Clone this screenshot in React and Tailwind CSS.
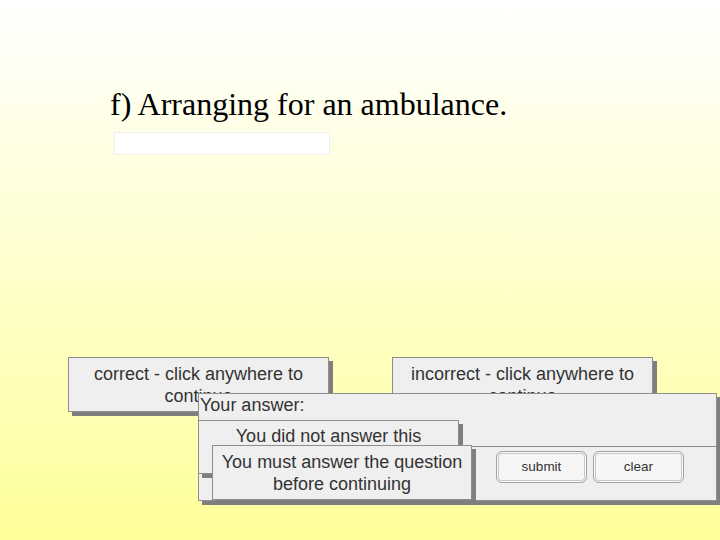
import React from 'react'

const sans = { fontFamily: '"Liberation Sans", Arial, sans-serif' }

function Panel({ className, children }) {
  return (
    <div
      style={sans}
      className={`absolute bg-[#efefef] border border-[#8e8e8e] shadow-[4px_4px_0_#7f7f7f] text-[#333] text-[18px] leading-[22px] ${className}`}
    >
      {children}
    </div>
  )
}

function Btn({ label }) {
  return (
    <div className="w-[91px] h-[32px] rounded-[6px] border border-[#a3a3a3] bg-[#f6f6f6] shadow-[inset_0_0_0_1px_#fafafa,inset_0_0_0_2px_#c8c8c8] flex items-center justify-center text-[13.5px] text-[#333]">
      {label}
    </div>
  )
}

export default function App() {
  return (
    <div className="relative w-[720px] h-[540px] overflow-hidden bg-gradient-to-b from-[#ffffff] via-[#ffffcc] to-[#ffff99]">
      <div className="pl-[110px] pt-[85px]">
        <h1 style={{ fontFamily: '"Liberation Serif", "Times New Roman", serif' }} className="text-[32px] leading-[38px] text-black">
          f) Arranging for an ambulance.
        </h1>
        <div className="ml-[4px] mt-[9px] w-[216px] h-[23px] bg-white border border-[#f0f0ea]" />
      </div>

      <Panel className="left-[68px] top-[357px] w-[261px] h-[55px] text-center pt-[5px]">
        correct - click anywhere to<br />continue
      </Panel>

      <Panel className="left-[392px] top-[357px] w-[261px] h-[55px] text-center pt-[5px]">
        incorrect - click anywhere to<br />continue
      </Panel>

      <Panel className="left-[198px] top-[393px] w-[519px] h-[108px] flex flex-col">
        <div className="h-[52px] pl-[1px]">Your answer:</div>
        <div className="ml-[272px] flex-1 border-t border-[#8e8e8e] flex gap-[6px] pl-[25px] pt-[4px]">
          <Btn label="submit" />
          <Btn label="clear" />
        </div>
      </Panel>

      <Panel className="left-[198px] top-[420px] w-[261px] h-[54px] text-center pt-[4px]">
        You did not answer this<br />question
      </Panel>

      <Panel className="left-[212px] top-[445px] w-[260px] h-[55px] text-center pt-[5px]">
        You must answer the question<br />before continuing
      </Panel>
    </div>
  )
}
